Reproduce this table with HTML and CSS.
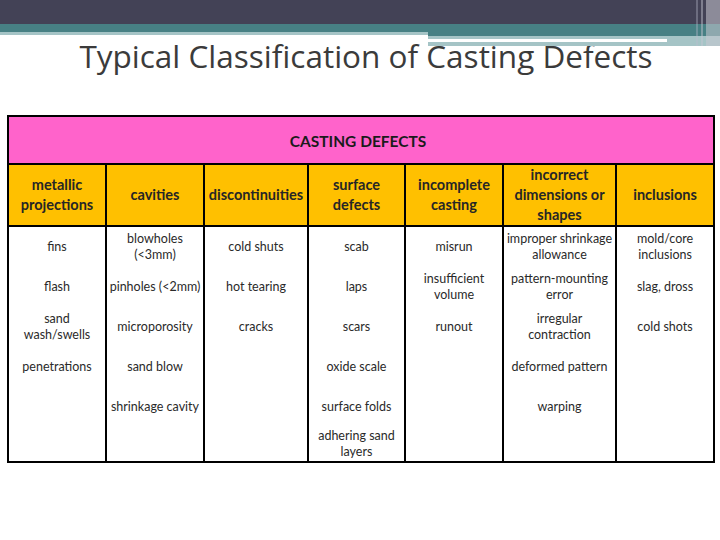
FILE: index.html
```html
<!DOCTYPE html>
<html>
<head>
<meta charset="utf-8">
<link rel="stylesheet" href="styles.css">
</head>
<body>
<header class="deco">
  <div class="dark"></div>
  <div class="bands">
    <div class="band-left"><div class="teal"></div><div class="light"></div></div>
    <div class="band-right"><div class="teal"></div><div class="light"><div class="line"></div></div></div>
  </div>
  <div class="stripes"><span class="s1"></span><span class="s2"></span><span class="s3"></span></div>
</header>
<h1 class="title">Typical Classification of Casting Defects</h1>
<main class="content">
<table class="defects">
  <colgroup>
    <col class="c1"><col class="c2"><col class="c3"><col class="c4"><col class="c5"><col class="c6"><col class="c7">
  </colgroup>
  <thead>
    <tr class="main-head"><th colspan="7">CASTING DEFECTS</th></tr>
    <tr class="cat-head">
      <th>metallic projections</th>
      <th>cavities</th>
      <th>discontinuities</th>
      <th>surface defects</th>
      <th>incomplete casting</th>
      <th>incorrect dimensions or shapes</th>
      <th>inclusions</th>
    </tr>
  </thead>
  <tbody>
    <tr>
      <td>fins</td><td>blowholes<br>(&lt;3mm)</td><td>cold shuts</td><td>scab</td><td>misrun</td><td>improper shrinkage allowance</td><td>mold/core inclusions</td>
    </tr>
    <tr>
      <td>flash</td><td>pinholes (&lt;2mm)</td><td>hot tearing</td><td>laps</td><td>insufficient volume</td><td>pattern-mounting error</td><td>slag, dross</td>
    </tr>
    <tr>
      <td>sand<br>wash/swells</td><td>microporosity</td><td>cracks</td><td>scars</td><td>runout</td><td>irregular<br>contraction</td><td>cold shots</td>
    </tr>
    <tr>
      <td>penetrations</td><td>sand blow</td><td></td><td>oxide scale</td><td></td><td>deformed pattern</td><td></td>
    </tr>
    <tr>
      <td></td><td>shrinkage cavity</td><td></td><td>surface folds</td><td></td><td>warping</td><td></td>
    </tr>
    <tr class="last">
      <td></td><td></td><td></td><td>adhering sand<br>layers</td><td></td><td></td><td></td>
    </tr>
  </tbody>
</table>
</main>
</body>
</html>
```

FILE: styles.css
```css
html, body {
  margin: 0;
  padding: 0;
  background: #ffffff;
}
body {
  width: 720px;
  height: 540px;
  overflow: hidden;
  font-family: "Open Sans", "DejaVu Sans", sans-serif;
}
.deco {
  position: relative;
  height: 40px;
}
.dark {
  height: 24px;
  background: #434256;
}
.bands {
  display: flex;
  height: 16px;
}
.band-left {
  width: 428px;
}
.band-left .teal {
  height: 8px;
  background: #478084;
}
.band-left .light {
  height: 3px;
  background: #a5c4c6;
}
.band-right {
  flex: 1;
}
.band-right .teal {
  height: 12px;
  background: #478084;
}
.band-right .light {
  height: 10px;
  background: #a5c4c6;
  padding-top: 3px;
  box-sizing: border-box;
}
.band-right .line {
  width: 239px;
  height: 3px;
  background: #ffffff;
}
.stripes {
  position: absolute;
  top: 0;
  right: 0;
  width: 24px;
  height: 46px;
}
.stripes span {
  position: absolute;
  top: 0;
  height: 46px;
}
.stripes .s1 { left: 0; width: 2px; background: rgba(190, 190, 205, 0.35); }
.stripes .s2 { left: 5px; width: 2px; background: rgba(200, 200, 210, 0.45); }
.stripes .s3 { left: 10px; width: 14px; background: rgba(200, 200, 210, 0.55); }

.title {
  margin: 0;
  font-family: "Open Sans", sans-serif;
  font-weight: 400;
  font-size: 31.5px;
  line-height: 32px;
  color: #3b3b3b;
  text-align: center;
  padding-left: 12px;
}
.content {
  padding: 43px 0 0 7px;
}
.defects {
  border-collapse: collapse;
  table-layout: fixed;
  width: 706px;
  border: 2px solid #000;
  font-family: "Lato", "Open Sans", sans-serif;
  color: #222;
}
.c1 { width: 98px; }
.c2 { width: 98px; }
.c3 { width: 104px; }
.c4 { width: 97px; }
.c5 { width: 98px; }
.c6 { width: 113px; }
.c7 { width: 98px; }
.defects th {
  border: 2px solid #000;
  padding: 0;
  text-align: center;
  vertical-align: middle;
}
.main-head th {
  height: 44px;
  background: #ff63cb;
  font-size: 15.5px;
  font-weight: 700;
  color: #1b1b1b;
  padding-top: 2px;
  padding-right: 6px;
}
.cat-head th {
  height: 55px;
  background: #ffc000;
  font-size: 14.5px;
  font-weight: 700;
  line-height: 20px;
  color: #262626;
  padding: 0 1px;
}
.defects td {
  border-left: 2px solid #000;
  border-right: 2px solid #000;
  height: 40px;
  padding: 0 2px;
  text-align: center;
  vertical-align: middle;
  font-size: 12.5px;
  line-height: 16px;
  color: #2a2a2a;
}
.defects tr.last td {
  height: 34px;
}
```
